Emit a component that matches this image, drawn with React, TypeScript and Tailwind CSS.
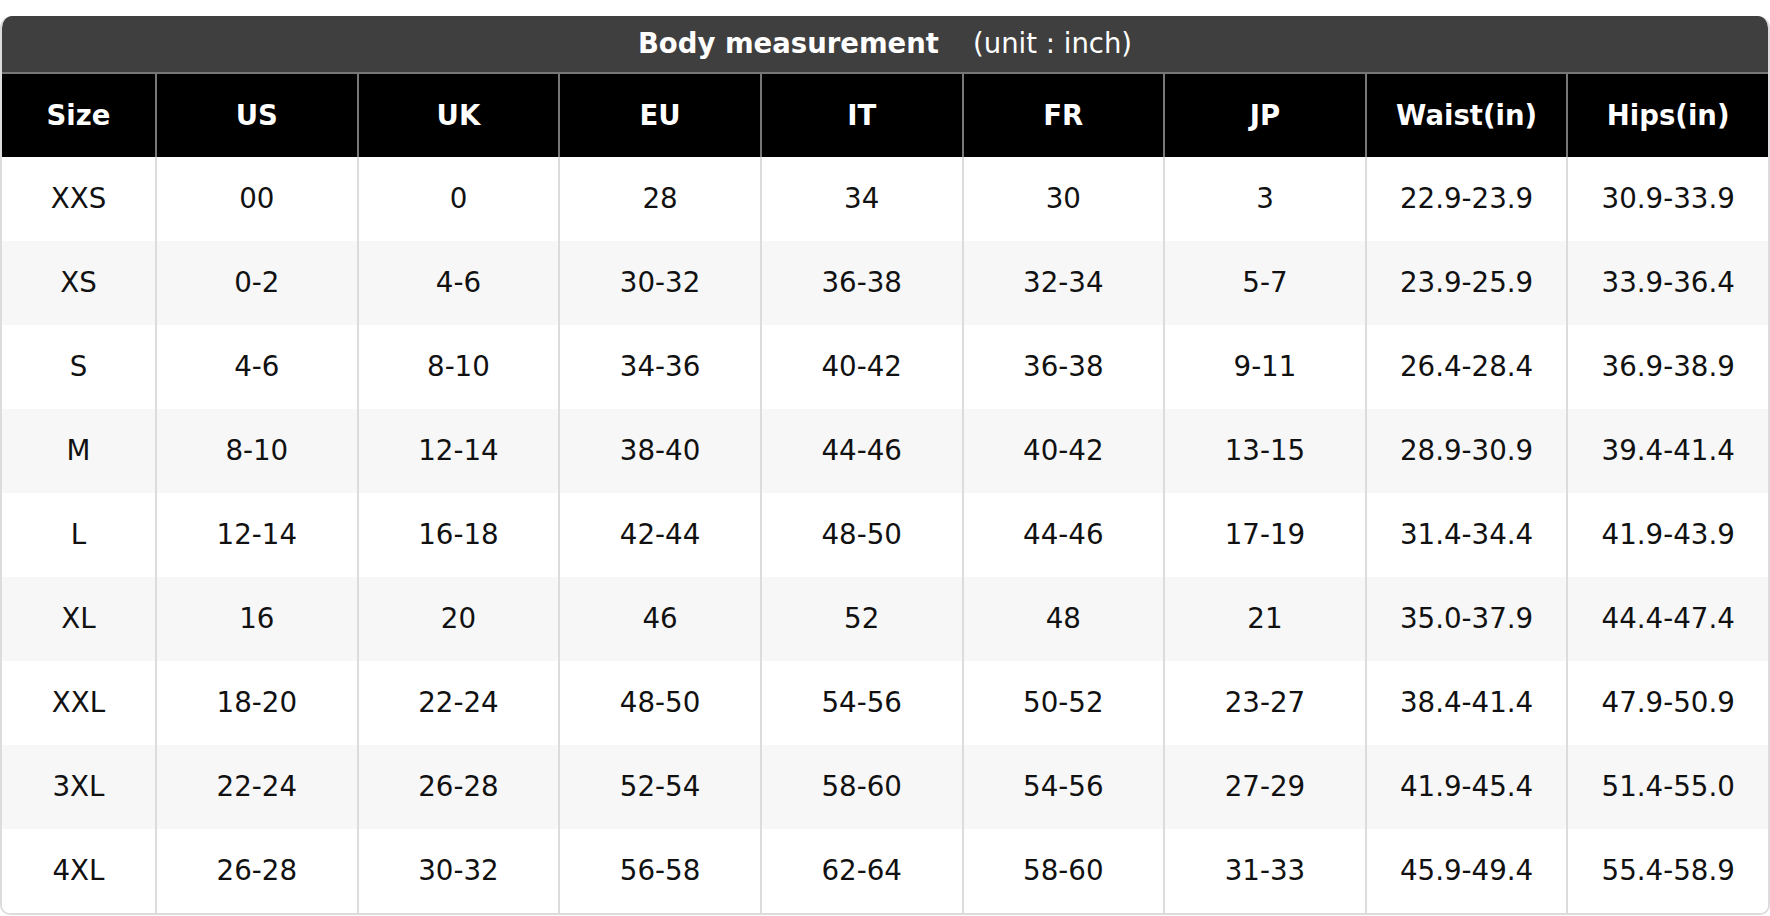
const headers = ["Size", "US", "UK", "EU", "IT", "FR", "JP", "Waist(in)", "Hips(in)"]

const rows = [
  ["XXS", "00", "0", "28", "34", "30", "3", "22.9-23.9", "30.9-33.9"],
  ["XS", "0-2", "4-6", "30-32", "36-38", "32-34", "5-7", "23.9-25.9", "33.9-36.4"],
  ["S", "4-6", "8-10", "34-36", "40-42", "36-38", "9-11", "26.4-28.4", "36.9-38.9"],
  ["M", "8-10", "12-14", "38-40", "44-46", "40-42", "13-15", "28.9-30.9", "39.4-41.4"],
  ["L", "12-14", "16-18", "42-44", "48-50", "44-46", "17-19", "31.4-34.4", "41.9-43.9"],
  ["XL", "16", "20", "46", "52", "48", "21", "35.0-37.9", "44.4-47.4"],
  ["XXL", "18-20", "22-24", "48-50", "54-56", "50-52", "23-27", "38.4-41.4", "47.9-50.9"],
  ["3XL", "22-24", "26-28", "52-54", "58-60", "54-56", "27-29", "41.9-45.4", "51.4-55.0"],
  ["4XL", "26-28", "30-32", "56-58", "62-64", "58-60", "31-33", "45.9-49.4", "55.4-58.9"],
]

export default function App() {
  return (
    <div className="bg-white pt-[16px] font-['DejaVu_Sans',sans-serif]">
      <div className="overflow-hidden rounded-t-[12px] rounded-b-[10px] border-x-2 border-b-2 border-[#dcdcdc]">
        <div className="flex h-[56px] items-center justify-center bg-[#3f3f3f] text-[27.5px] text-white">
          <span className="font-bold">Body measurement</span>
          <span className="ml-[34px]">(unit : inch)</span>
        </div>
        <div className="grid grid-cols-[153px_repeat(8,1fr)] border-t-2 border-[#777]">
          {headers.map((h, i) => (
            <div
              key={h}
              className={`flex h-[83px] items-center justify-center bg-black text-[27.5px] font-bold text-white ${
                i > 0 ? "border-l-2 border-[#777]" : ""
              }`}
            >
              {h}
            </div>
          ))}
          {rows.map((row, r) =>
            row.map((cell, i) => (
              <div
                key={`${r}-${i}`}
                className={`flex h-[84px] items-center justify-center text-[27.7px] text-[#111] ${
                  r % 2 === 1 ? "bg-[#f7f7f7]" : "bg-white"
                } ${i > 0 ? "border-l-2 border-[#dcdcdc]" : ""}`}
              >
                {cell}
              </div>
            ))
          )}
        </div>
      </div>
    </div>
  )
}
